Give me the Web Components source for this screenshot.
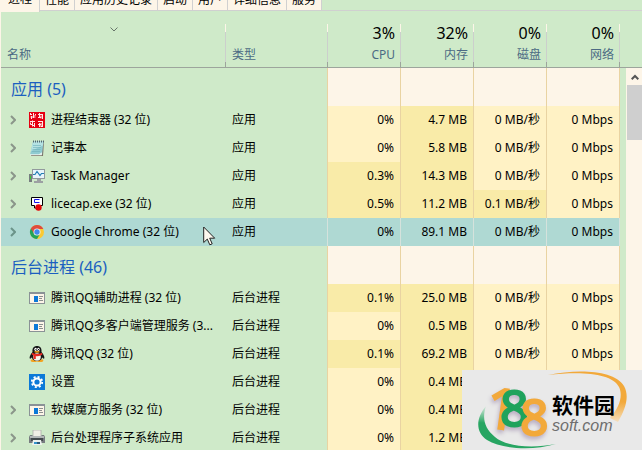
<!DOCTYPE html>
<html lang="zh-CN">
<head>
<meta charset="utf-8">
<title>任务管理器</title>
<style>
  html, body { height: 100%; }
  body {
    margin: 0;
    overflow: hidden;
    background: #cfeac9;
    color: #000;
    font: 12px/16px "Noto Sans", "Noto Sans CJK SC", sans-serif;
  }
</style>
</head>
<body>
<task-window>
  <tab-strip slot="tabs">
    <tab-item selected>进程</tab-item>
    <tab-item>性能</tab-item>
    <tab-item>应用历史记录</tab-item>
    <tab-item>启动</tab-item>
    <tab-item>用户</tab-item>
    <tab-item>详细信息</tab-item>
    <tab-item>服务</tab-item>
  </tab-strip>
  <process-table></process-table>
  <scroll-bar slot="scroll"></scroll-bar>
  <site-badge slot="badge"></site-badge>
  <mouse-pointer slot="pointer"></mouse-pointer>
</task-window>

<script>
function define(tag, css, template) {
  customElements.define(tag, class extends HTMLElement {
    constructor() {
      super();
      const shadow = this.attachShadow({ mode: "open" });
      shadow.innerHTML = `<style>${css}</style>${template}`;
    }
  });
}

define("task-window", /*css*/`
  :host { display: block; position: relative; height: 100%; overflow: hidden; border-left: 1px solid #fdf5e8; box-sizing: border-box; }
  .list { position: relative; height: calc(100% - 12px); }
  ::slotted([slot="scroll"]) { position: absolute; top: 56px; right: 0; bottom: 0; }
  ::slotted([slot="badge"]) { position: absolute; right: 0; bottom: 0; }
  ::slotted([slot="pointer"]) { position: absolute; left: 202px; top: 226px; }
`, `
  <slot name="tabs"></slot>
  <div class="list"><slot></slot><slot name="scroll"></slot></div>
  <slot name="badge"></slot>
  <slot name="pointer"></slot>
`);

define("tab-strip", /*css*/`
  :host { display: flex; align-items: flex-end; height: 12px; overflow: hidden; background: linear-gradient(#d0d0d0, #d0d0d0) 0 10px / 100% 1px no-repeat; }
`, `<slot></slot>`);

define("tab-item", /*css*/`
  :host { display: block; margin-bottom: 1px; border-right: 1px solid #d0d0d0; border-bottom: 1px solid #d0d0d0; }
  :host([selected]) { margin: 0; border-bottom: 0; }
  button { display: block; border: 0; margin: 0; padding: 0 5px; height: 20px; background: #fdf5e8; color: inherit; font: inherit; }
  :host([selected]) button { height: 24px; padding: 0 7px 2px; }
`, `<button type="button"><slot></slot></button>`);

define("scroll-bar", /*css*/`
  :host { display: flex; flex-direction: column; width: 16px; background: #fdf5e8; }
  button { display: flex; align-items: center; justify-content: center; height: 17px; border: 0; padding: 1px 0 0 1px; background: none; }
  .thumb { height: 55px; margin-left: 1px; background: #cfcfcf; }
`, `
  <button type="button" aria-label="向上滚动">
    <svg width="8" height="6"><path d="M.7 5.2 4 2l3.300 3.200" fill="none" stroke="#555" stroke-width="2"/></svg>
  </button>
  <div class="thumb"></div>
`);

const icons = {
  seal: `
    <path d="M0 0h16v16H0z" fill="#e60012"/>
    <path d="M1 2.500h2M4.500 1v5M1.500 5h5M2.500 4v3M6.500 2v1M9 2.500h5M10.500 1v5M13.500 2v5M9 5.500h3M1 9.500h5M3.500 8.500v6M1.500 12.500h2M5.500 11v4M9 9.500h5M10.500 11v4M13.500 10v5M9 12.500h3M11.500 14.500h2M1.500 1v2M5.500 3.500h1M12 3.500v3M1.500 10.500v2M4 13.500h2M12 11v3" stroke="#ffe8e6" fill="none"/>`,
  notepad: `
    <path d="M5 2h10l-1 14H2z" fill="#7d7468"/>
    <path d="M4 1.500h10.500L13 15H1z" fill="#8fcbd1"/>
    <path d="M4 1.500h10.500l-.6 4L2 11z" fill="#b5e2e3"/>
    <path d="M1 14.200h9l3-2-.2 3H1z" fill="#e9f4ee"/>
    <path d="M4 5.500h8M4 7.500h8M3.500 9.500h8M3 11.500h8" stroke="#6eb0b9" stroke-width=".6"/>
    <path d="M4 1.500h11" stroke="#526670" stroke-width="2" stroke-dasharray="1 1"/>`,
  monitor: `
    <path d="M0 6h3v8H0z" fill="#777d80"/><path d="M1 8h1v3H1z" fill="#35d333"/>
    <path d="M3 1h13v10H3z" fill="#92999d"/><path d="M4 2h11v8H4z" fill="#e8f4fa"/>
    <path d="M4 6.500h2l2-3 3 4 1.500-2H15" fill="none" stroke="#247fb6" stroke-width="1.200"/>
    <path d="M8 11h4v2h2v2H5v-2h3z" fill="#9ca0a3"/>`,
  licecap: `
    <path d="M2.500 1.500h11v8h-2v2.500h-6V9.500h-3z" fill="#fff" stroke="#000"/>
    <path d="M10.500 3.500H5.500v3h5" fill="none" stroke="#1717e8"/>
    <circle cx="9.500" cy="11.500" r="3.200" fill="#e30808"/>`,
  chrome: `
    <circle cx="8" cy="8" r="7" fill="#fbc932"/>
    <path d="M8 8 1.900 4.500A7 7 0 0 0 8 15l3-5z" fill="#24a35a"/>
    <path d="M1.900 4.500A7 7 0 0 1 14.300 5H8v3l-3 1.500z" fill="#de4b3e"/>
    <circle cx="8" cy="8" r="3.500" fill="#f6f4ed"/><circle cx="8" cy="8" r="2.700" fill="#4289ee"/>`,
  window: `
    <path d="M0 2h16v12H0z" fill="#8a9296"/><path d="M1 4h14v9H1z" fill="#fdf5e8"/>
    <path d="M5 6h4v6H5z" fill="#0b79d8"/>
    <path d="M10 6.500h4M10 8.500h3M10 10.500h4" stroke="#8a8f8d"/>`,
  penguin: `
    <ellipse cx="5" cy="14.500" rx="3.300" ry="1.500" fill="#f3a321"/><ellipse cx="11" cy="14.500" rx="3.300" ry="1.500" fill="#f3a321"/>
    <path d="M3.500 6C3 2 5 0 8 0s5 2 4.500 6c2 2.500 3.500 5 2.700 6.500-.5.600-1.500-.5-2-1C12.500 13.500 11 15 8 15s-4.500-1.500-5.200-3.500c-.5.500-1.500 1.600-2 1C0 11 1.500 8.500 3.500 6z" fill="#171717"/>
    <ellipse cx="8" cy="11" rx="3.800" ry="3.700" fill="#f7f5ef"/>
    <ellipse cx="6.600" cy="3.300" rx="1.200" ry="1.600" fill="#fff"/><ellipse cx="9.400" cy="3.300" rx="1.200" ry="1.600" fill="#fff"/>
    <path d="M6.500 3h1v1h-1zM9 3h1v1H9z" fill="#111"/>
    <ellipse cx="8" cy="5.800" rx="2.800" ry=".9" fill="#f5a81c"/>
    <path d="M3 6.800q5 2.500 10 0l.3 2Q8 11 6.800 10v3H4.500V9.300L2.800 8.800z" fill="#e72a24"/>`,
  gear: `
    <path d="M0 0h16v16H0z" fill="#0b79d8"/>
    <circle cx="8" cy="8" r="5.200" fill="none" stroke="#fff" stroke-width="1.800" stroke-dasharray="2.040 2.040"/>
    <circle cx="8" cy="8" r="3.600" fill="none" stroke="#fff" stroke-width="2"/>`,
  printer: `
    <path d="M4 0h8v7H4z" fill="#f1eee6" stroke="#a8a8a5" stroke-width=".7"/>
    <path d="M1 5h2l1 1h8l1-1h2l1 2v6H0V7z" fill="#777c80"/>
    <path d="M1 6h14v2H1z" fill="#b4b7b8"/><path d="M2 8h12v3H2z" fill="#44494d"/>
    <path d="M4 10h8l1 5H3z" fill="#edf2ef"/><path d="M5 12h3v2H5z" fill="#3695cb"/><path d="M8 12h3v2H8z" fill="#2b5a78"/>`,
};

customElements.define("app-icon", class extends HTMLElement {
  constructor() {
    super();
    this.attachShadow({ mode: "open" });
  }
  connectedCallback() {
    this.shadowRoot.innerHTML = `
      <style>:host { display: block; flex: none; width: 16px; height: 16px; } svg { display: block; }</style>
      <svg width="16" height="16" viewBox="0 0 16 16">${icons[this.getAttribute("name")]}</svg>
    `;
  }
});

const groups = [
  ["应用 (5)", "应用", [
    ["seal", "进程结束器 (32 位)", "0%", "4.7 MB", "0 MB/秒", "0 Mbps", true],
    ["notepad", "记事本", "0%", "5.8 MB", "0 MB/秒", "0 Mbps", true],
    ["monitor", "Task Manager", "0.3%", "14.3 MB", "0 MB/秒", "0 Mbps", true],
    ["licecap", "licecap.exe (32 位)", "0.5%", "11.2 MB", "0.1 MB/秒", "0 Mbps", true],
    ["chrome", "Google Chrome (32 位)", "0%", "89.1 MB", "0 MB/秒", "0 Mbps", true],
  ]],
  ["后台进程 (46)", "后台进程", [
    ["window", "腾讯QQ辅助进程 (32 位)", "0.1%", "25.0 MB", "0 MB/秒", "0 Mbps", false],
    ["window", "腾讯QQ多客户端管理服务 (3...", "0%", "0.5 MB", "0 MB/秒", "0 Mbps", false],
    ["penguin", "腾讯QQ (32 位)", "0.1%", "69.2 MB", "0 MB/秒", "0 Mbps", false],
    ["gear", "设置", "0%", "0.4 MB", "0 MB/秒", "0 Mbps", false],
    ["window", "软媒魔方服务 (32 位)", "0%", "0.4 MB", "0 MB/秒", "0 Mbps", true],
    ["printer", "后台处理程序子系统应用", "0%", "1.2 MB", "0 MB/秒", "0 Mbps", true],
  ]],
];
const totals = [["3%", "CPU"], ["32%", "内存"], ["0%", "磁盘"], ["0%", "网络"]];

const expander = (name) => `
  <button type="button" aria-label="展开 ${name}">
    <svg width="6" height="10"><path d="M1 1l4 4-4 4" fill="none" stroke="currentColor" stroke-width="2"/></svg>
  </button>`;

function row([icon, name, cpu, mem, disk, net, expandable], type) {
  const cells = [cpu, mem, disk, net].map((v) => `<td class="num ${parseFloat(v) ? "warm" : ""}">${v}</td>`).join("");
  return `
    <tr class="${icon === "chrome" ? "selected" : ""}">
      <td><div class="name">${expandable ? expander(name) : "<i></i>"}<app-icon name="${icon}"></app-icon><span>${name}</span></div></td>
      <td class="type">${type}</td>${cells}<td class="gutter"></td>
    </tr>`;
}

define("process-table", /*css*/`
  :host { display: block; }
  table { width: 100%; table-layout: fixed; border-collapse: separate; border-spacing: 0; }
  .c-type { width: 102px; }
  .c-num { width: 73px; }
  .c-gutter { width: 22px; }
  th, td { padding: 0; font-weight: normal; text-align: left; white-space: nowrap; }

  thead th {
    height: 51px; padding: 0 6px 4px; vertical-align: bottom; color: #4c6a84; border-bottom: 1px solid #9da59c;
    background: linear-gradient(#fdf5e8 8px, #cccfcc 8px 38px, #9da59c 38px) right 12px / 1px 43px no-repeat;
  }
  thead th:last-child { background: none; }
  thead .num { text-align: right; }
  thead b { display: block; margin-bottom: 3px; font-size: 16px; line-height: 22px; font-weight: normal; color: #000; }
  thead svg { display: block; margin: 0 auto 15px; }

  .group th { height: 35px; padding: 3px 10px 0; font-size: 16px; line-height: 24px; color: #1b5fc0; vertical-align: middle; border-right: 1px solid #e9d3a2; }
  .group td { background: #fdf5e8; border-right: 1px solid #e9d3a2; }

  tbody td { height: 28px; }
  .name { display: flex; align-items: center; padding-left: 8px; }
  .name button, .name i { flex: none; width: 20px; height: 16px; }
  .name button { display: flex; align-items: center; border: 0; padding: 0 1px; background: none; color: #8b968a; }
  .name span { margin-left: 6px; }
  .type { padding-left: 6px; border-right: 1px solid #e9d3a2; }
  tbody .num { padding-right: 6px; text-align: right; background: #fff2c5; border-right: 1px solid #e9d3a2; }
  tbody .num.warm { background: #f9eba8; }
  tbody .selected td:not(.gutter) { background: #afd9d3; border-color: #d5e2dc; }
  tbody .selected button { color: #6b9389; }
  tbody .gutter { border: 0; background: none; }
`, `
  <table>
    <colgroup><col><col class="c-type"><col class="c-num" span="4"><col class="c-gutter"></colgroup>
    <thead><tr>
      <th scope="col" aria-sort="ascending"><svg width="8" height="5"><path d="M.5.500 4 4 7.500.500" fill="none" stroke="#68756a"/></svg>名称</th>
      <th scope="col">类型</th>
      ${totals.map(([v, label]) => `<th scope="col" class="num"><b>${v}</b>${label}</th>`).join("")}
      <th></th>
    </tr></thead>
    ${groups.map(([title, type, rows]) => `
      <tbody>
        <tr class="group"><th scope="rowgroup" colspan="2">${title}</th>${"<td></td>".repeat(4)}<td class="gutter"></td></tr>
        ${rows.map((r) => row(r, type)).join("")}
      </tbody>`).join("")}
  </table>
`);

define("mouse-pointer", /*css*/`
  :host { display: block; pointer-events: none; }
  svg { display: block; }
`, `
  <svg width="13" height="20"><path d="M.7 1v15.500l3.600-3.400 2.500 5.700 2.400-1-2.500-5.600h5z" fill="#fdf8ee" stroke="#222"/></svg>
`);

define("site-badge", /*css*/`
  :host { display: block; width: 180px; height: 80px; background: #e9e9e9; }
  svg { display: block; }
  text { font-family: "Liberation Sans", "Noto Sans CJK SC", sans-serif; }
  .digits { filter: drop-shadow(-1px 3px 2px #b9aec2); }
  .digits text { font-family: "Noto Sans", sans-serif; font-size: 50px; stroke-width: 2; }
  .digits .tall { font-size: 56px; }
  .orange { fill: #f2a93b; stroke: #f2a93b; }
  .green { fill: #1fa35c; stroke: #1fa35c; }
`, `
  <svg width="180" height="80" viewBox="0 0 180 80">
    <defs>
      <linearGradient id="g" x1="0" y1="0" x2="0" y2="1"><stop offset="0" stop-color="#dcebe0"/><stop offset=".4" stop-color="#27a562"/></linearGradient>
      <linearGradient id="o" x1="0" y1="0" x2="0" y2="1"><stop offset=".6" stop-color="#f2a93b"/><stop offset="1" stop-color="#f5dfbd"/></linearGradient>
    </defs>
    <path d="M24 36C14 48 13 62 25 70c15 9 45 11 69 4-26 5-51 2-61-7-11-9-13-19-9-31z" fill="url(#g)"/>
    <path d="M86 5c30-6 66-5 76 11 6 11 1 24-6 36l-8-4c10-11 13-23 9-31C150 3 119 1 86 5z" fill="url(#o)"/>
    <g class="digits">
      <text class="orange tall" x="24" y="59" transform="rotate(8 40 40)">1</text>
      <text class="green" x="38" y="56">8</text>
      <text class="orange" x="58" y="65">8</text>
    </g>
    <text x="90" y="43" font-size="21" font-weight="bold">软件园</text>
    <text x="90" y="61" font-size="16" font-style="italic" fill="#6e6e6e">soft.com</text>
  </svg>
`);
</script>
</body>
</html>
